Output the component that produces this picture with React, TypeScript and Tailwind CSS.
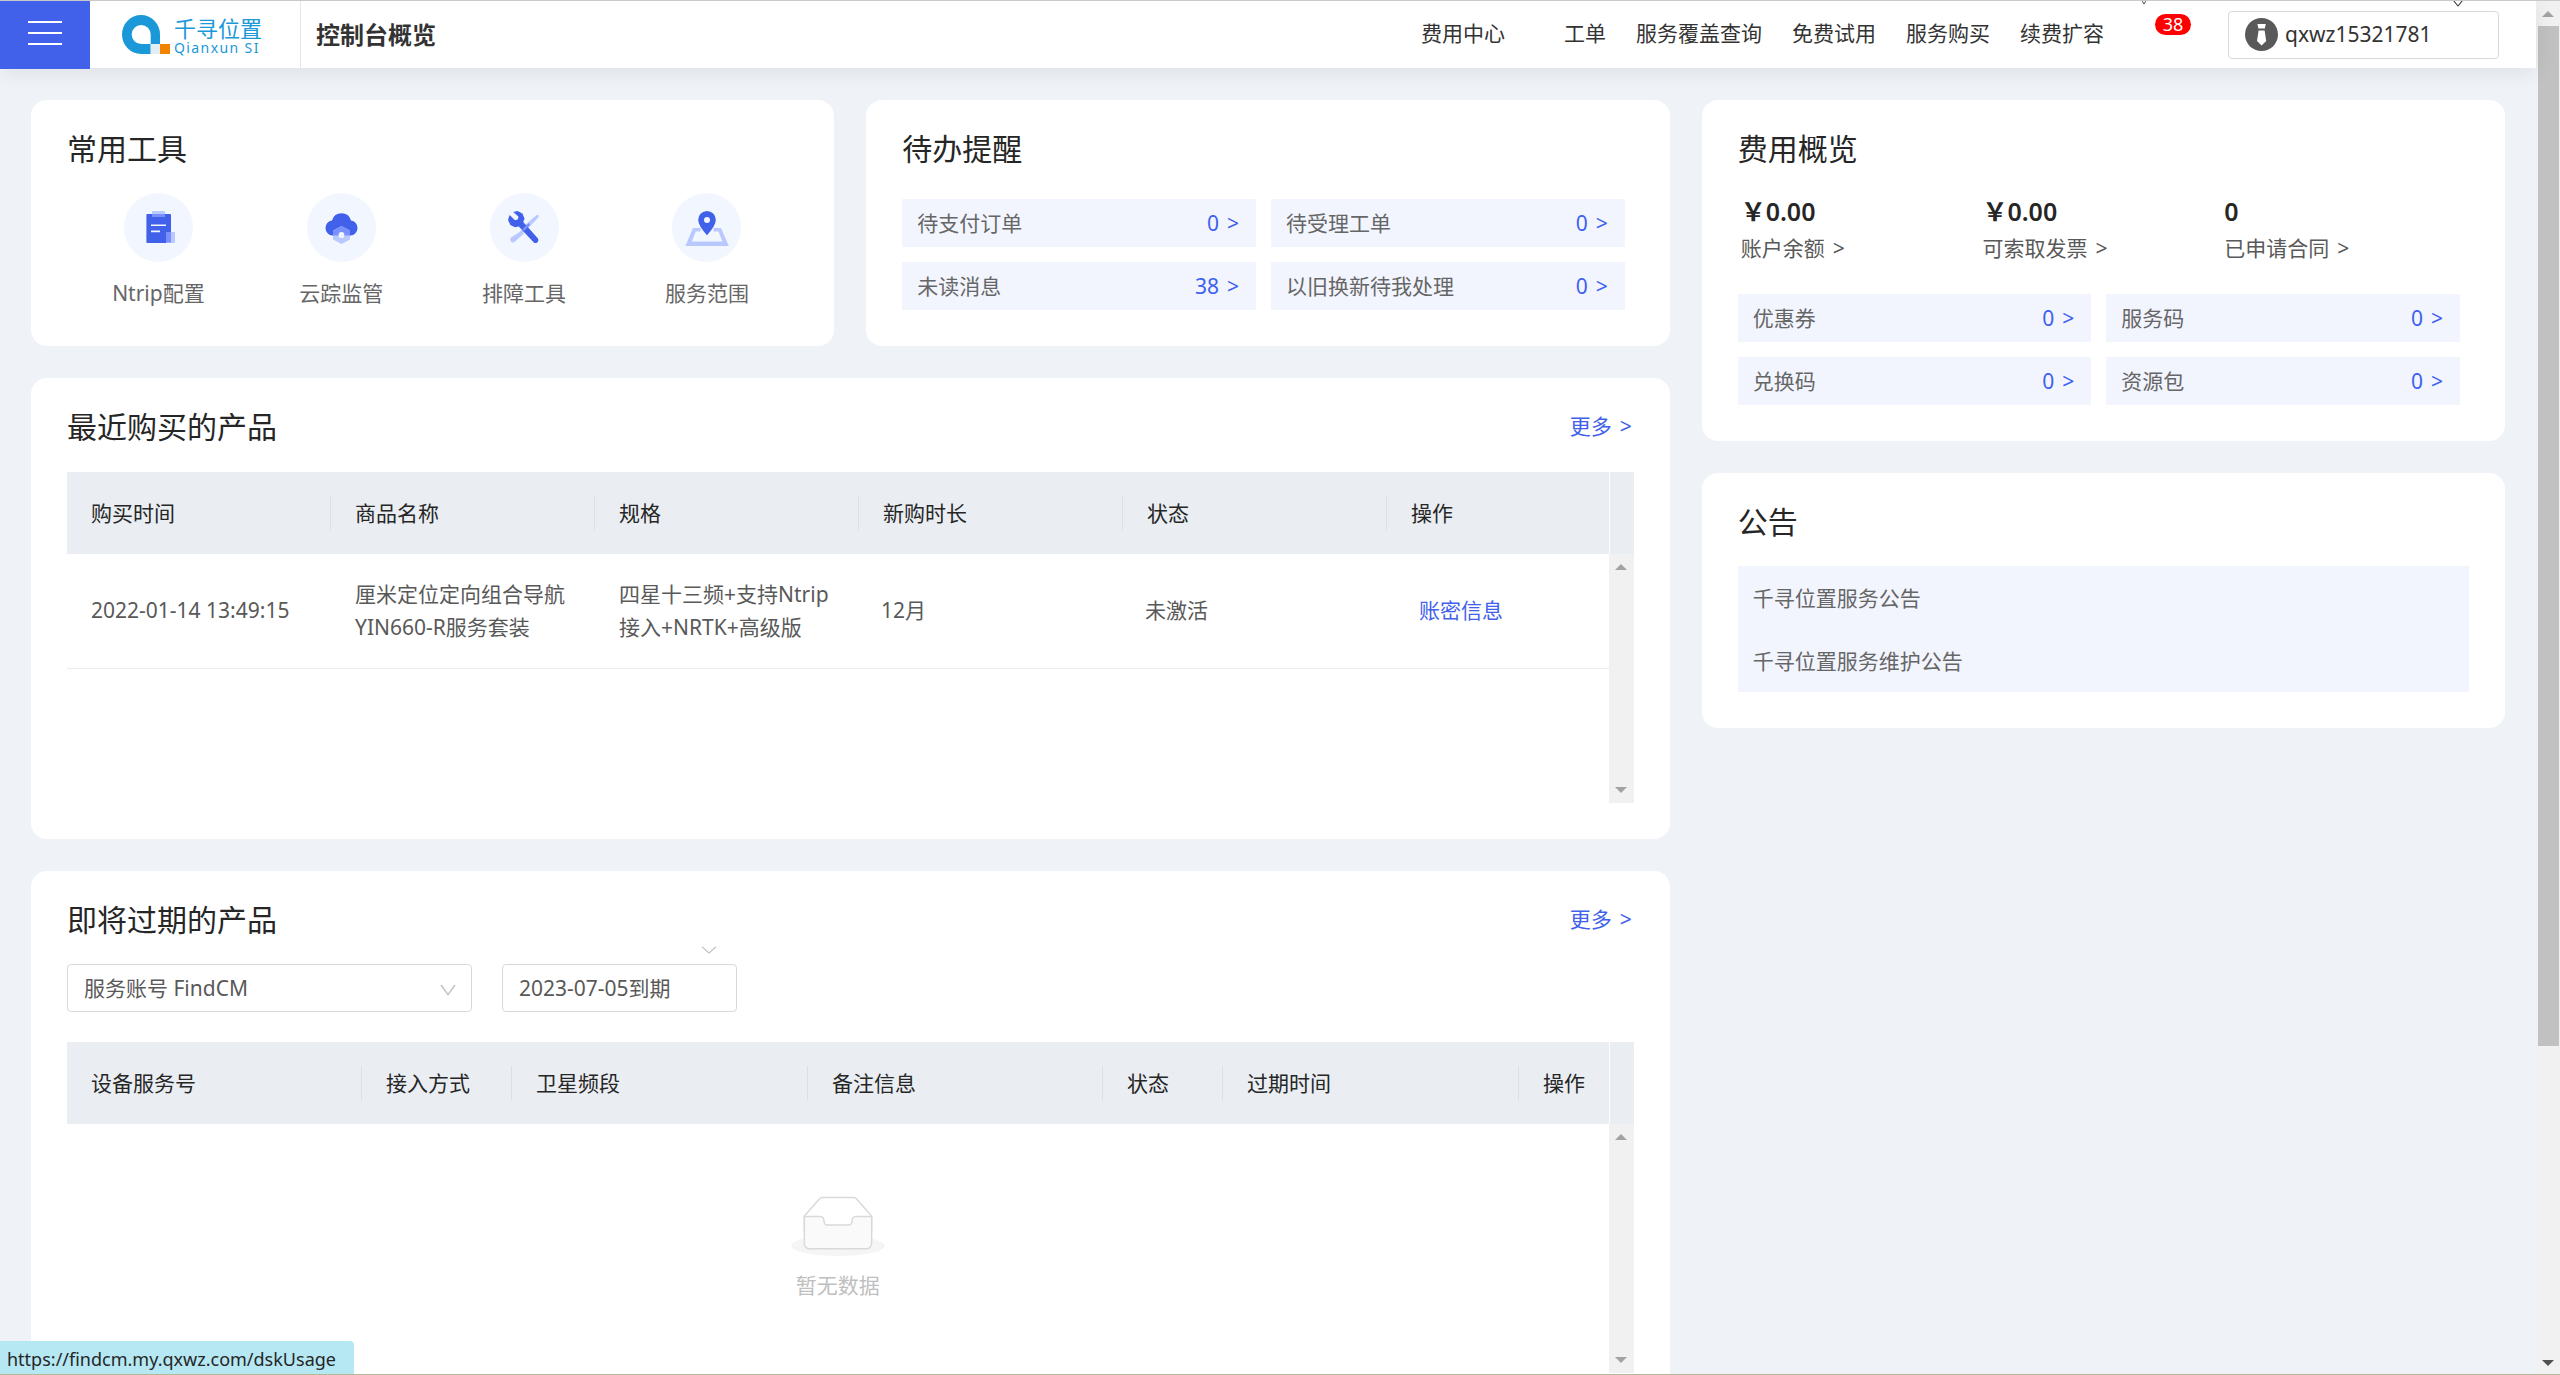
import type { ReactNode } from 'react';

const tools = [
  { label: 'Ntrip配置', icon: <ClipboardIcon /> },
  { label: '云踪监管', icon: <CloudIcon /> },
  { label: '排障工具', icon: <WrenchIcon /> },
  { label: '服务范围', icon: <MapPinIcon /> },
];

const todos = [
  { label: '待支付订单', count: 0 },
  { label: '待受理工单', count: 0 },
  { label: '未读消息', count: 38 },
  { label: '以旧换新待我处理', count: 0 },
];

// Full-width yen sign
const YEN = '\uFFE5';

const balances = [
  { label: '账户余额', value: `${YEN}0.00` },
  { label: '可索取发票', value: `${YEN}0.00` },
  { label: '已申请合同', value: '0' },
];

const assets = [
  { label: '优惠券', count: 0 },
  { label: '服务码', count: 0 },
  { label: '兑换码', count: 0 },
  { label: '资源包', count: 0 },
];

const notices = ['千寻位置服务公告', '千寻位置服务维护公告'];

const navItems = ['工单', '服务覆盖查询', '免费试用', '服务购买', '续费扩容'];

interface Column {
  title: string;
  width?: string;
}

const recentColumns: Column[] = [
  { title: '购买时间', width: 'w-[264px]' },
  { title: '商品名称', width: 'w-[264px]' },
  { title: '规格', width: 'w-[264px]' },
  { title: '新购时长', width: 'w-[264px]' },
  { title: '状态', width: 'w-[264px]' },
  { title: '操作' },
];

const expiringColumns: Column[] = [
  { title: '设备服务号', width: 'w-[295px]' },
  { title: '接入方式', width: 'w-[150px]' },
  { title: '卫星频段', width: 'w-[296px]' },
  { title: '备注信息', width: 'w-[295px]' },
  { title: '状态', width: 'w-[120px]' },
  { title: '过期时间', width: 'w-[296px]' },
  { title: '操作' },
];

function Logo() {
  return (
    <svg width="48" height="39" viewBox="0 0 48 39" aria-hidden="true">
      <path
        fill="#1b98d8"
        fillRule="evenodd"
        d="M38 29V19.5A19 19.5 0 1 0 19 39H28.7V29H38ZM28.7 29V19.5A9.5 9.5 0 1 0 19.2 29H28.7Z"
      />
      <path fill="#e3edf4" d="M28.7 29H38V39H28.7Z" />
      <path fill="#f08300" d="M38 29H48V39H38Z" />
    </svg>
  );
}

function ClipboardIcon() {
  return (
    <svg width="69" height="69" viewBox="0 0 69 69" aria-hidden="true">
      <rect x="22.4" y="21" width="24.6" height="29" rx="1" fill="#4161ea" />
      <rect x="28" y="18" width="13" height="6" rx="1" fill="#b9c9ff" />
      <path d="M28 21H41V23.4Q41 24 40.4 24H28.6Q28 24 28 23.4Z" fill="#7990fd" />
      <path d="M27 32.2H42M27 38.4H36" stroke="#f2f6ff" strokeWidth="1.6" />
      <rect x="42" y="39" width="9" height="11" rx="1" fill="#b9c9ff" />
      <path d="M42 39H47V49.5H42Z" fill="#7990fd" />
    </svg>
  );
}

function CloudIcon() {
  return (
    <svg width="69" height="69" viewBox="0 0 69 69" aria-hidden="true">
      <path
        fill="#4161ea"
        d="M25.5 42.5A7.6 7.6 0 0 1 25 27.4A9.9 9.9 0 0 1 44 27.4A7.6 7.6 0 0 1 43.5 42.5Z"
      />
      <path
        fill="#b9c9ff"
        fillRule="evenodd"
        d="M34.5 33L43 37.6V46.4L34.5 51L26 46.4V37.6ZM34.5 39.2A2.8 2.8 0 1 0 34.5 44.8A2.8 2.8 0 1 0 34.5 39.2Z"
      />
      <path fill="#7990fd" d="M34.5 33L43 37.6V42.5H26V37.6Z" />
      <circle cx="34.5" cy="42" r="2.9" fill="#f2f6ff" />
    </svg>
  );
}

function WrenchIcon() {
  return (
    <svg width="69" height="69" viewBox="0 0 69 69" aria-hidden="true">
      <path
        fill="#b9c9ff"
        d="M45.8 22.4L48.4 21.4L48.6 24L46.8 26L36.6 36.8L32.6 33.9L44.6 24ZM32 37.6L34 40.4L25 48.4A2.6 2.6 0 0 1 21 44.6Z"
      />
      <path d="M44.8 25.2L30.6 40.2" stroke="#b9c9ff" strokeWidth="2.6" />
      <path
        fill="#4161ea"
        d="M19.6 22L25 27.2L28 26.2L28.4 23.4L23.2 19L27.6 18L32.4 20.4L34.6 25.8L33.2 29L48 45.6A2.9 2.9 0 0 1 43.8 49.4L28.8 33.4L25 34.2L20.4 32L18 27Z"
      />
      <path d="M39.4 30.8L33.2 37.2" stroke="#7990fd" strokeWidth="2.4" />
    </svg>
  );
}

function MapPinIcon() {
  return (
    <svg width="69" height="69" viewBox="0 0 69 69" aria-hidden="true">
      <path
        fill="#b9c9ff"
        d="M28.5 35H21L13.4 53H56.8L49 35H41.5V38.6H46.5L50.4 48.6H19.8L23.8 38.6H28.5Z"
      />
      <path
        fill="#4161ea"
        fillRule="evenodd"
        d="M35 42.2Q26.2 32.6 26.2 26.8A8.8 8.8 0 0 1 43.8 26.8Q43.8 32.6 35 42.2ZM35 24A3 3 0 1 0 35 30A3 3 0 1 0 35 24Z"
      />
    </svg>
  );
}

function UserIcon() {
  return (
    <svg width="33" height="33" viewBox="0 0 33 33" aria-hidden="true">
      <circle cx="16.5" cy="16.5" r="16.5" fill="#595959" />
      <path d="M12.4 6H20.8L19.8 10.4H13.4ZM13.6 12.6H19.6L21.2 23L16.6 27.4L12 23Z" fill="#fff" />
    </svg>
  );
}

function Chevron({ className }: { className: string }) {
  return (
    <svg
      viewBox="0 0 16 12"
      preserveAspectRatio="none"
      fill="none"
      stroke="currentColor"
      strokeWidth="1.4"
      className={className}
      aria-hidden="true"
    >
      <path d="M1 1L8 10.6L15 1" />
    </svg>
  );
}

function EmptyIcon() {
  return (
    <svg width="94" height="60" viewBox="0 0 64 41" aria-hidden="true">
      <g transform="translate(0 1)" fill="none">
        <ellipse fill="#f5f5f5" cx="32" cy="33" rx="32" ry="7" />
        <g stroke="#d9d9d9">
          <path
            fill="#fff"
            d="M55 12.76L44.854 1.258C44.367.474 43.656 0 42.907 0H21.093c-.749 0-1.46.474-1.947 1.257L9 12.761V22h46v-9.24z"
          />
          <path
            fill="#fafafa"
            d="M41.613 15.931c0-1.605.994-2.93 2.227-2.931H55v18.137C55 33.26 53.68 35 52.05 35h-40.1C10.32 35 9 33.259 9 31.137V13h11.16c1.233 0 2.227 1.323 2.227 2.928v.022c0 1.605 1.005 2.901 2.237 2.901h14.752c1.232 0 2.237-1.308 2.237-2.913v-.007z"
          />
        </g>
      </g>
    </svg>
  );
}

function Triangle({ down = false, dark = false }: { down?: boolean; dark?: boolean }) {
  return (
    <svg width="12" height="6" viewBox="0 0 12 6" fill={dark ? '#505050' : '#a3a3a3'} aria-hidden="true">
      <path d={down ? 'M0 0H12L6 6Z' : 'M0 6H12L6 0Z'} />
    </svg>
  );
}

function Card({ title, more, children }: { title: string; more?: boolean; children: ReactNode }) {
  return (
    <section className="rounded-2xl bg-white px-9 pt-6 pb-9">
      <div className="flex h-[50px] items-center justify-between pb-[2px]">
        <h2 className="text-[30px] text-[#262626]">{title}</h2>
        {more && (
          <a href="#" className="flex gap-2 pr-[2px] text-[#4161ea]">
            更多 <span>&gt;</span>
          </a>
        )}
      </div>
      {children}
    </section>
  );
}

function CountGrid({ items }: { items: { label: string; count: number }[] }) {
  return (
    <div className="mr-[9px] grid grid-cols-2 gap-[15px]">
      {items.map((item) => (
        <a
          key={item.label}
          href="#"
          className="flex h-12 items-center justify-between bg-[#f2f5fe] pt-px pr-[17px] pl-[15px]"
        >
          <span className="text-[#666]">{item.label}</span>
          <span className="flex gap-2 text-[#3d61f0]">
            {item.count} <span>&gt;</span>
          </span>
        </a>
      ))}
    </div>
  );
}

function DataTable({ columns, children }: { columns: Column[]; children: ReactNode }) {
  return (
    <div className="flex">
      <table className="w-full table-fixed self-start text-left">
        <thead>
          <tr className="h-[82px] bg-[#eaeef3]">
            {columns.map((col, i) => (
              <th key={col.title} className={`p-0 font-normal text-[#262626] ${col.width ?? ''}`}>
                <div
                  className={`flex h-[34px] items-center pl-6 ${i < columns.length - 1 ? 'border-r border-[#dcdfe4]' : ''}`}
                >
                  {col.title}
                </div>
              </th>
            ))}
          </tr>
        </thead>
        <tbody>{children}</tbody>
      </table>
      {/* Scroll track beside the rows */}
      <div className="flex w-[25px] shrink-0 flex-col">
        <div className="h-[82px] border-l border-white bg-[#eaeef3]" />
        <div className="flex h-[249px] flex-col items-center justify-between bg-[#f1f1f1] py-[10px]">
          <Triangle />
          <Triangle down />
        </div>
      </div>
    </div>
  );
}

function Header() {
  return (
    <header className="relative z-10 flex h-[67px] shrink-0 items-center bg-white text-[#333] shadow-[0_4px_20px_rgba(0,0,0,0.08)]">
      <button
        type="button"
        aria-label="菜单"
        className="flex h-[68px] w-[90px] shrink-0 flex-col items-center justify-center gap-[9px] self-start bg-[#4161ea] pb-1"
      >
        <span className="h-[2px] w-[34px] bg-white" />
        <span className="h-[2px] w-[34px] bg-white" />
        <span className="h-[2px] w-[34px] bg-white" />
      </button>
      <div className="flex h-full w-[211px] shrink-0 items-center gap-1 border-r border-[#e6e6e6] pl-8">
        <Logo />
        <div className="flex flex-col pt-[2px] text-[#1b98d8]">
          <span className="text-[22px] leading-6">千寻位置</span>
          <span className="text-sm leading-4 tracking-widest">Qianxun SI</span>
        </div>
      </div>
      <h1 className="ml-[15px] text-2xl font-bold">控制台概览</h1>

      <nav className="ml-auto flex items-center gap-[30px] pb-[2px]">
        <a href="#" className="mr-[29px]">
          费用中心
        </a>
        {navItems.map((item) => (
          <a key={item} href="#">
            {item}
          </a>
        ))}
      </nav>
      <button type="button" aria-label="消息" className="relative mr-[37px] ml-[51px] flex h-full items-center pb-5">
        <span className="flex h-[21px] w-9 items-center justify-center rounded-full bg-[#f00] text-[18px] text-white">
          38
        </span>
        <Chevron className="absolute -top-1 -left-[15px] h-2 w-2" />
      </button>
      <button
        type="button"
        className="relative mr-[37px] flex h-12 w-[271px] items-center gap-[7px] rounded border border-[#d9d9d9] pl-4"
      >
        <UserIcon />
        qxwz15321781
        <Chevron className="absolute -top-[13px] right-[34px] h-2 w-3" />
      </button>
    </header>
  );
}

export default function App() {
  return (
    <div className="relative flex h-screen overflow-hidden border-t border-b border-t-[#c9c9c9] border-b-[#b5b894] bg-[#eff3f8] font-['Noto_Sans','Noto_Sans_CJK_SC',sans-serif] text-[21px] leading-[33px]">
      <div className="flex min-w-0 flex-1 flex-col">
        <Header />
        <main className="grid flex-1 grid-cols-3 items-start gap-8 px-[31px] pt-8">
          <div className="col-span-2 flex flex-col gap-8">
            <div className="grid grid-cols-2 gap-8">
              <Card title="常用工具">
                <div className="grid grid-cols-4 pt-[19px]">
                  {tools.map((tool) => (
                    <a key={tool.label} href="#" className="flex flex-col items-center gap-[15px] text-[#666]">
                      <span className="rounded-full bg-[#f2f6ff]">{tool.icon}</span>
                      {tool.label}
                    </a>
                  ))}
                </div>
              </Card>
              <Card title="待办提醒">
                <div className="pt-[25px]">
                  <CountGrid items={todos} />
                </div>
              </Card>
            </div>

            <Card title="最近购买的产品" more>
              <div className="pt-5">
                <DataTable columns={recentColumns}>
                  <tr className="h-[114px] border-b border-[#ebebeb] text-[#595959]">
                    <td className="pl-6">2022-01-14 13:49:15</td>
                    <td className="px-6">厘米定位定向组合导航YIN660-R服务套装</td>
                    <td className="pr-5 pl-6">四星十三频+支持Ntrip接入+NRTK+高级版</td>
                    <td className="pl-[22px]">12月</td>
                    <td className="pl-[22px]">未激活</td>
                    <td className="pl-8">
                      <a href="#" className="text-[#4161ea]">
                        账密信息
                      </a>
                    </td>
                  </tr>
                </DataTable>
              </div>
            </Card>

            <Card title="即将过期的产品" more>
              <div className="flex items-start gap-[30px] pt-[19px] pb-[30px] text-[#595959]">
                <div className="relative">
                  <select
                    aria-label="服务账号"
                    className="h-12 w-[405px] appearance-none rounded border border-[#d9d9d9] bg-white px-4"
                  >
                    <option>服务账号 FindCM</option>
                  </select>
                  <Chevron className="pointer-events-none absolute top-5 right-4 h-3 w-4 text-[#bfbfbf]" />
                </div>
                <div className="relative">
                  <select
                    aria-label="到期时间"
                    className="h-12 w-[235px] appearance-none rounded border border-[#d9d9d9] bg-white px-4"
                  >
                    <option>2023-07-05到期</option>
                  </select>
                  <Chevron className="pointer-events-none absolute -top-[18px] right-5 h-2 w-4 text-[#bfbfbf]" />
                </div>
              </div>
              <DataTable columns={expiringColumns}>
                <tr>
                  <td colSpan={expiringColumns.length}>
                    <div className="flex flex-col items-center gap-[13px] pt-[72px] text-[#bfbfbf]">
                      <EmptyIcon />
                      暂无数据
                    </div>
                  </td>
                </tr>
              </DataTable>
            </Card>
          </div>

          <div className="flex flex-col gap-8">
            <Card title="费用概览">
              <div className="mr-[6px] grid grid-cols-3 pt-[21px] pb-[29px]">
                {balances.map((item) => (
                  <div key={item.label} className="flex flex-col gap-1 pl-[3px]">
                    <span className="text-[25px] font-semibold text-[#262626]">{item.value}</span>
                    <a href="#" className="flex gap-2 text-[#595959]">
                      {item.label} <span>&gt;</span>
                    </a>
                  </div>
                ))}
              </div>
              <CountGrid items={assets} />
            </Card>

            <Card title="公告">
              <ul className="mt-[19px] bg-[#f2f5fe]">
                {notices.map((notice) => (
                  <li key={notice} className="flex h-[63px] items-center px-[15px] pt-px">
                    <a href="#" className="text-[#666]">
                      {notice}
                    </a>
                  </li>
                ))}
              </ul>
            </Card>
          </div>
        </main>
      </div>

      {/* Page scrollbar */}
      <div className="flex w-6 shrink-0 flex-col items-center bg-[#f1f1f1] pt-[10px] pb-2">
        <Triangle />
        <div className="mt-[9px] mb-auto h-[1020px] w-[21px] bg-[#c1c1c1]" />
        <Triangle down dark />
      </div>

      <div className="absolute bottom-0 left-0 z-20 flex h-[33px] items-center rounded-tr bg-[#b5e8f3] pt-[3px] pr-[18px] pl-[7px] text-[18px] text-[#262626]">
        https://findcm.my.qxwz.com/dskUsage
      </div>
    </div>
  );
}
